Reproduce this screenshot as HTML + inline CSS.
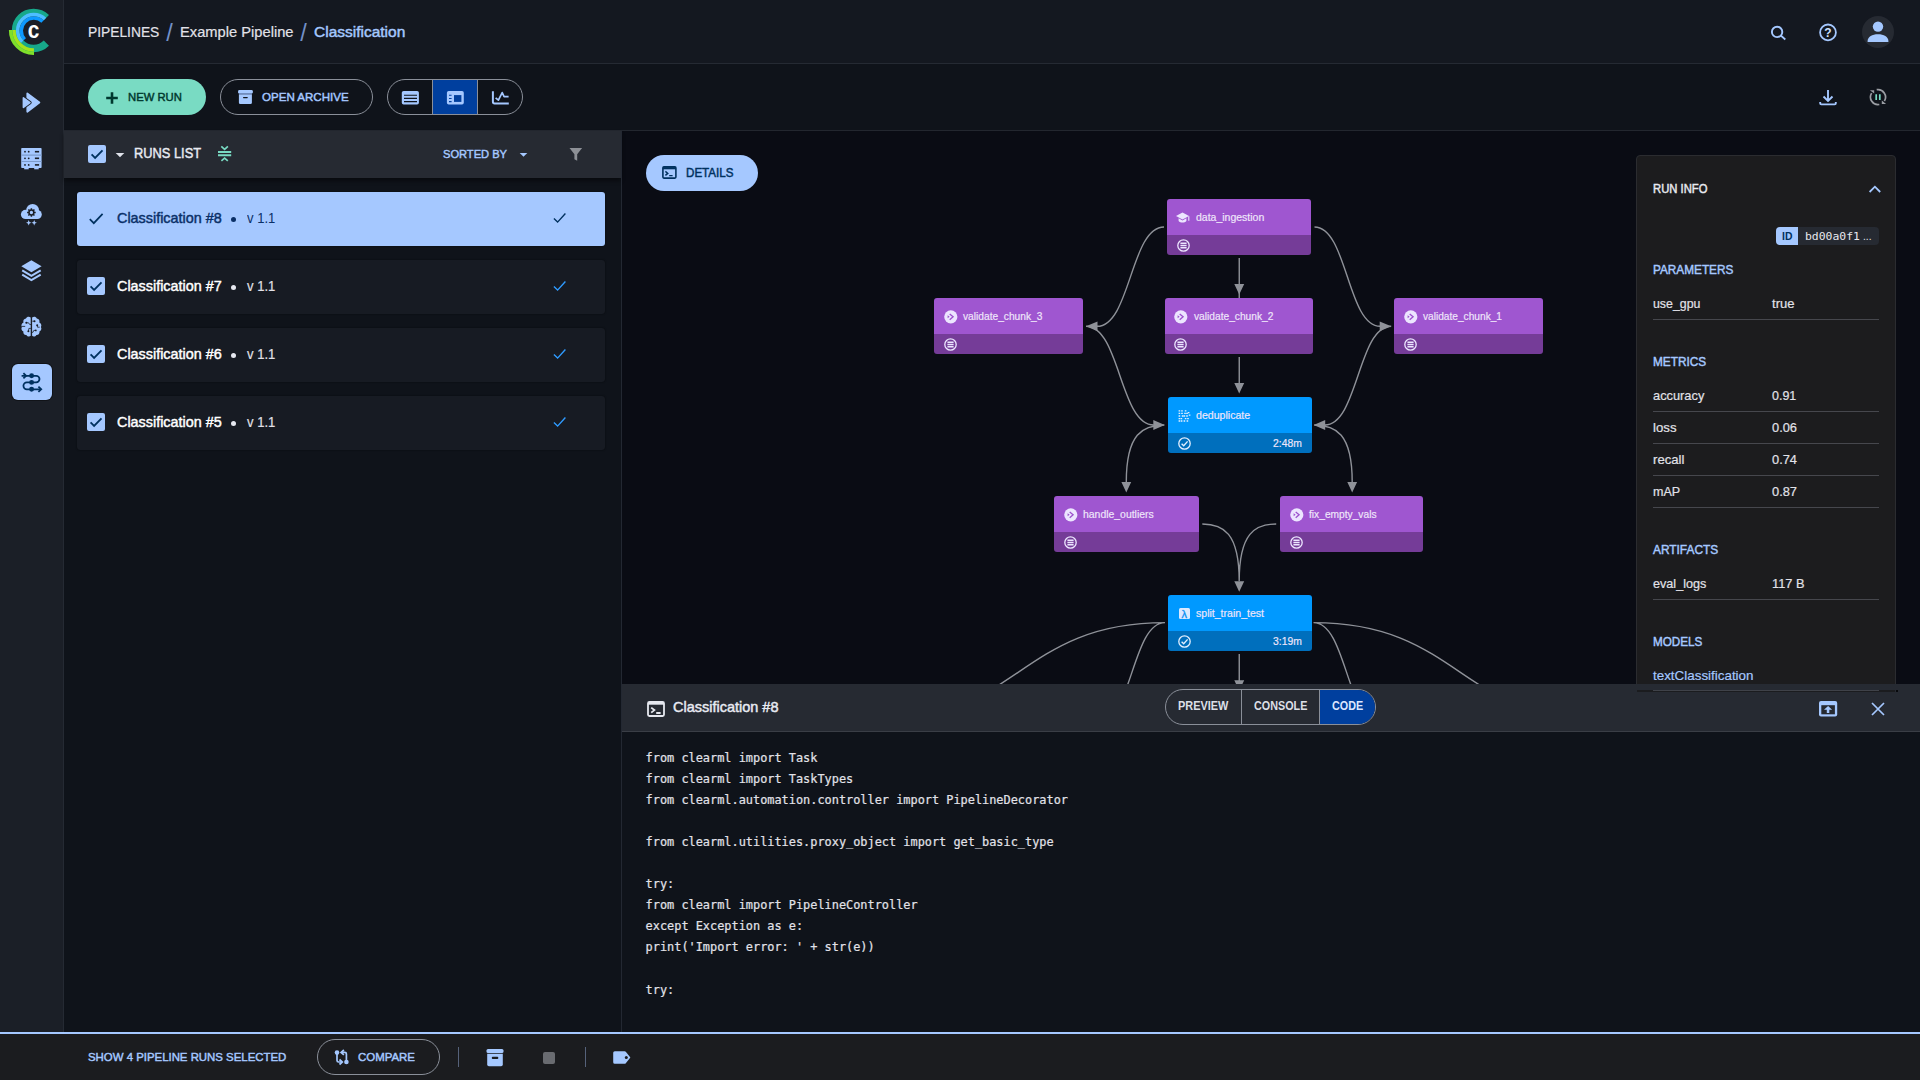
<!DOCTYPE html>
<html lang="en">
<head>
<meta charset="utf-8">
<title>Pipelines - Example Pipeline - Classification</title>
<style>
*{box-sizing:border-box;margin:0;padding:0}
html,body{width:1920px;height:1080px;overflow:hidden;background:#0f131a}
body{font-family:"Liberation Sans",sans-serif;color:#e2e2e9;position:relative;-webkit-font-smoothing:antialiased}
.abs{position:absolute}
.t{position:absolute;white-space:pre;line-height:1;transform-origin:0 0}
.b{font-weight:700}
svg{position:absolute;overflow:visible}
/* regions */
#sidebar{left:0;top:0;width:64px;height:1032px;background:#1b1f27;border-right:1px solid #252a33}
#header{left:64px;top:0;width:1856px;height:64px;background:#141820;border-bottom:1px solid #252a33}
#toolbar{left:64px;top:64px;width:1856px;height:67px;background:#0f131a;border-bottom:1px solid #23272f}
#listpanel{left:64px;top:131px;width:557px;height:901px;background:#0f131a}
#listhead{left:64px;top:131px;width:557px;height:47px;background:#262a32;box-shadow:0 3px 4px rgba(0,0,0,.45)}
#splitter{left:621px;top:131px;width:1px;height:901px;background:#232832}
#graph{left:622px;top:131px;width:1298px;height:554px;background:#0a0c14;overflow:hidden}
#codehead{left:622px;top:684px;width:1298px;height:48px;background:#262a32;border-bottom:1px solid #3a3e46}
#codebody{left:622px;top:732px;width:1298px;height:300px;background:#0f131a}
#bottombar{left:0;top:1032px;width:1920px;height:48px;background:#1b1c1f;border-top:2px solid #a5c8ff}
.item{position:absolute;left:77px;width:528px;height:54px;border-radius:3px;background:#171b23;box-shadow:0 0 1.5px rgba(0,0,0,.8)}
.item.sel{background:#a5c8ff}
.cb{position:absolute;width:18px;height:18px;border-radius:2px;background:#a5c8ff}
.pill{position:absolute;border-radius:18px;height:36px}
.node{position:absolute;height:56px;border-radius:3px;overflow:hidden}
.node .top{position:absolute;left:0;top:0;right:0;height:36px}
.node .bot{position:absolute;left:0;top:36px;right:0;height:20px}
.node.p .top{background:#9f56d0}
.node.p .bot{background:#753c98}
.node.bl .top{background:#0099ff}
.node.bl .bot{background:#006fbd}
.nt{position:absolute;white-space:pre;line-height:1;font-size:11.5px;color:#efe4fa;top:12px;left:29px}
.code{position:absolute;left:645.6px;-webkit-text-stroke:.2px #e2e2e9;white-space:pre;font-family:"DejaVu Sans Mono","Liberation Mono",monospace;font-size:11.9px;line-height:21.1px;color:#e2e2e9}
</style>
</head>
<body>
<div class="abs" id="sidebar"></div>
<div class="abs" id="header"></div>
<div class="abs" id="toolbar"></div>
<div class="abs" id="listpanel"></div>
<div class="abs" id="graph"></div>
<div class="abs" id="listhead"></div>
<div class="abs" id="splitter"></div>
<div class="abs" id="codehead"></div>
<div class="abs" id="codebody"></div>
<div class="abs" id="bottombar"></div>
<!--SIDEBAR-->
<svg style="left:0;top:0" width="64" height="64" viewBox="0 0 64 64"><path d="M46.38 43.18A18.075 18.075 0 1 1 46.38 17.62" fill="none" stroke="#17a88a" stroke-width="7.350"/><path d="M24.66 39.34A12.65 12.65 0 0 1 42.54 21.46" fill="none" stroke="#0d99ff" stroke-width="3.500"/><path d="M22.20 41.80A16.125 16.125 0 0 1 45.00 19.00" fill="none" stroke="#4dbeff" stroke-width="3.500"/><path d="M33.94 50.00A19.6 19.6 0 0 1 14.00 30.06" fill="none" stroke="#a6e31c" stroke-width="3.400"/><path d="M34.00 53.40A23.0 23.0 0 0 1 10.60 30.00" fill="none" stroke="#7fe02a" stroke-width="3.400"/><text x="33.500" y="37.800" font-family="Liberation Sans,sans-serif" font-weight="700" font-size="23.500" fill="#fff" text-anchor="middle" textLength="11.600" lengthAdjust="spacingAndGlyphs">c</text></svg>
<svg style="left:12px;top:84px" width="40" height="40" viewBox="12 84 40 40"><path d="M27.3 93.4L39.4 102.5L27.3 111.8z" fill="#a5c8ff" stroke="#a5c8ff" stroke-width="1.8" stroke-linejoin="round"/><path d="M23.4 97.9L30 102.6L23.4 107.3z" fill="#a5c8ff" stroke="#1b1f27" stroke-width="3.4" stroke-linejoin="round"/><path d="M23.4 97.9L30 102.6L23.4 107.3z" fill="#a5c8ff" stroke="#a5c8ff" stroke-width="1.6" stroke-linejoin="round"/></svg><svg style="left:12px;top:140px" width="40" height="40" viewBox="12 140 40 40"><rect x="21.2" y="148" width="20.4" height="20" rx=".8" fill="#a5c8ff"/><rect x="24.2" y="167.5" width="4.5" height="1.8" fill="#a5c8ff"/><rect x="34.2" y="167.5" width="4.5" height="1.8" fill="#a5c8ff"/><path d="M21.2 155.1h20.4M21.2 161.5h20.4" stroke="#7d9ccc" stroke-width="1.1"/><circle cx="25" cy="151.7" r=".9" fill="#1b1f27"/><circle cx="28.7" cy="151.7" r=".9" fill="#1b1f27"/><rect x="34.9" y="150.9" width="4.2" height="1.6" fill="#1b1f27"/><circle cx="25" cy="158.3" r=".9" fill="#1b1f27"/><circle cx="28.7" cy="158.3" r=".9" fill="#1b1f27"/><rect x="34.9" y="157.5" width="4.2" height="1.6" fill="#1b1f27"/><circle cx="25" cy="164.9" r=".9" fill="#1b1f27"/><circle cx="28.7" cy="164.9" r=".9" fill="#1b1f27"/><rect x="34.9" y="164.1" width="4.2" height="1.6" fill="#1b1f27"/></svg><svg style="left:12px;top:196px" width="40" height="40" viewBox="12 196 40 40"><g fill="#a5c8ff"><circle cx="25.500" cy="214.400" r="4.600"/><circle cx="32.600" cy="210.400" r="6.400"/><circle cx="37.300" cy="214.500" r="4.500"/><rect x="25.500" y="211" width="11.800" height="8"/></g><path d="M33.20 212.50L35.70 212.50M32.67 213.77L34.44 215.54M31.40 214.30L31.40 216.80M30.13 213.77L28.36 215.54M29.60 212.50L27.10 212.50M30.13 211.23L28.36 209.46M31.40 210.70L31.40 208.20M32.67 211.23L34.44 209.46" stroke="#1b1f27" stroke-width="1.5"/><circle cx="31.4" cy="212.5" r="2.4" fill="#a5c8ff" stroke="#1b1f27" stroke-width="1.5"/><path d="M28.7 220.10000000000002Q28.925 222.57500000000002 31.4 222.8Q28.925 223.025 28.7 225.5Q28.474999999999998 223.025 26.0 222.8Q28.474999999999998 222.57500000000002 28.7 220.10000000000002zM34.2 220.10000000000002Q34.425000000000004 222.57500000000002 36.900000000000006 222.8Q34.425000000000004 223.025 34.2 225.5Q33.975 223.025 31.500000000000004 222.8Q33.975 222.57500000000002 34.2 220.10000000000002z" fill="#a5c8ff"/></svg><svg style="left:12px;top:250px" width="40" height="40" viewBox="12 250 40 40"><path d="M31.4 260.2L41.6 266.3L31.4 272.3L21.3 266.3z" fill="#a5c8ff"/><path d="M22.2 270.4L31.4 275.9L40.7 270.4" fill="none" stroke="#a5c8ff" stroke-width="2.1"/><path d="M22.2 274.6L31.4 280.1L40.7 274.6" fill="none" stroke="#a5c8ff" stroke-width="2.1"/></svg><svg style="left:12px;top:306px" width="40" height="40" viewBox="12 306 40 40"><path d="M30.7 317.6c-1.6-1.3-4-.9-4.7 1c-2 .1-3.200 2-2.500 3.800c-1.800 .9-2.700 3-1.600 4.700c-1.100 1.500-.300 3.800 1.500 4.400c-.500 2 1.100 3.700 3 3.400c.900 1.700 3 2 4.300 .9z" fill="#a5c8ff"/><path d="M30.7 317.6c-1.6-1.3-4-.9-4.7 1c-2 .1-3.200 2-2.500 3.800c-1.800 .9-2.700 3-1.600 4.700c-1.100 1.500-.300 3.800 1.500 4.400c-.500 2 1.100 3.700 3 3.400c.900 1.700 3 2 4.300 .9z" fill="#a5c8ff" transform="translate(62.8 0) scale(-1 1)"/><g fill="#1b1f27"><circle cx="26.3" cy="322.8" r="1"/><circle cx="28.4" cy="331.3" r="1"/><circle cx="34.5" cy="321.2" r="1"/><circle cx="37.2" cy="325.3" r="1"/><circle cx="35.8" cy="330.4" r=".9"/></g><path d="M26.300 322.800h2.200l1.200 1.700h1.200M21.600 326.400h3.600M28.400 331.300l.500-2.900h2M34.500 321.200h-2.200M37.200 325.300l.300 1.900h2.200M35.800 330.400h-2l-.800 1.900h-1" fill="none" stroke="#1b1f27" stroke-width=".8"/></svg><div class="abs" style="left:12px;top:364px;width:40px;height:36px;border-radius:6px;background:#a5c8ff;box-shadow:0 0 0 1px #111318"></div><svg style="left:12px;top:362px" width="40" height="40" viewBox="12 362 40 40"><path d="M21.6 375.8H36.200a3.300 3.300 0 0 1 0 6.600H26.900a3.450 3.450 0 0 0 0 6.900H41" fill="none" stroke="#00315f" stroke-width="1.800"/><path d="M23.400 373.200l2.700 2.600l-2.700 2.600M38.400 386.700l2.800 2.600l-2.800 2.600" fill="none" stroke="#00315f" stroke-width="1.800"/><circle cx="31.6" cy="375.8" r="2.450" fill="#00315f"/><circle cx="31.6" cy="382.4" r="2.450" fill="#00315f"/><circle cx="31.6" cy="389.3" r="2.450" fill="#00315f"/></svg>
<!--HEADER-->
<span class="t" style="left:88.4px;top:24.76px;font-size:14.7px;color:#e2e2e9;-webkit-text-stroke:.18px #e2e2e9;transform:scaleX(0.9391)">PIPELINES</span>
<span class="t" style="left:166.2px;top:22.41px;font-size:23.5px;color:#7391c8">/</span>
<span class="t" style="left:180.3px;top:24.76px;font-size:14.7px;color:#e2e2e9;-webkit-text-stroke:.18px #e2e2e9;transform:scaleX(1.0001)">Example Pipeline</span>
<span class="t" style="left:300.2px;top:22.41px;font-size:23.5px;color:#7391c8">/</span>
<span class="t" style="left:314px;top:24.76px;font-size:14.7px;color:#a5c8ff;-webkit-text-stroke:.45px #a5c8ff;transform:scaleX(1.0551)">Classification</span>
<svg style="left:1768px;top:22px" width="20" height="20" viewBox="0 0 20 20"><circle cx="9.100" cy="9.900" r="5.200" fill="none" stroke="#a5c8ff" stroke-width="1.900"/><path d="M12.800 13.500L17.300 17.500" stroke="#a5c8ff" stroke-width="1.700"/></svg>
<svg style="left:1818px;top:22px" width="20" height="20" viewBox="0 0 20 20"><circle cx="10" cy="10.4" r="7.9" fill="none" stroke="#a5c8ff" stroke-width="1.8"/><text x="10" y="14.6" font-family="Liberation Sans,sans-serif" font-weight="700" font-size="12" fill="#cfe0ff" text-anchor="middle">?</text></svg>
<div class="abs" style="left:1862px;top:16px;width:32px;height:32px;border-radius:16px;background:#262a32"></div>
<svg style="left:1862px;top:16px" width="32" height="32" viewBox="0 0 32 32"><circle cx="16" cy="10.6" r="5.2" fill="#a5c8ff"/><path d="M5.6 26v-1.2c0-4 4.6-6.6 10.4-6.6s10.4 2.6 10.4 6.6V26z" fill="#a5c8ff"/></svg>
<!--TOOLBAR-->
<div class="pill" style="left:88px;top:79px;width:118px;background:#79dbc3"></div>
<svg style="left:105px;top:91px" width="14" height="14" viewBox="0 0 14 14"><path d="M7 1.200v11.600M1.200 7h11.600" stroke="#00382e" stroke-width="2.600"/></svg>
<span class="t" style="left:128px;top:90.98px;font-size:11.6px;color:#00382e;-webkit-text-stroke:.45px #00382e;transform:scaleX(0.9731)">NEW RUN</span>
<div class="pill" style="left:220px;top:79px;width:153px;border:1px solid #8a8f99"></div>
<svg style="left:230px;top:82px" width="40" height="30" viewBox="230 82 40 30"><rect x="238.100" y="90.100" width="14.700" height="3.400" rx="1.200" fill="#a5c8ff"/><rect x="238.900" y="93" width="13" height="1.700" fill="#6f8cbf"/><path d="M238.900 94.600h13v8.100a1.400 1.400 0 0 1-1.400 1.400h-10.200a1.400 1.400 0 0 1-1.400-1.400z" fill="#a5c8ff"/><rect x="243" y="96.900" width="4.800" height="1.300" rx=".6" fill="#0f131a"/></svg>
<span class="t" style="left:261.7px;top:90.98px;font-size:11.6px;color:#a5c8ff;-webkit-text-stroke:.45px #a5c8ff;transform:scaleX(0.9956)">OPEN ARCHIVE</span>
<div class="pill" style="left:387px;top:79px;width:136px;border:1px solid #8a8f99;overflow:hidden"><div class="abs" style="left:44px;top:0;width:46px;height:34px;background:#003f9e;border-left:1px solid #8a8f99;border-right:1px solid #8a8f99"></div></div>
<svg style="left:395px;top:82px" width="40" height="30" viewBox="395 82 40 30"><rect x="401.800" y="91" width="17.100" height="13.600" rx="1.800" fill="#a5c8ff"/><path d="M404 95.250h13M404 98.400h13M404 101.650h13" stroke="#0f131a" stroke-width="1.200"/></svg>
<svg style="left:435px;top:82px" width="40" height="30" viewBox="435 82 40 30"><rect x="446.900" y="91" width="16.900" height="13.600" rx="1.800" fill="#a5c8ff"/><rect x="454" y="95.100" width="7.400" height="6.800" fill="#003f9e"/><path d="M449 95.300h2.600M449 98.450h2.600M449 101.650h2.600" stroke="#003f9e" stroke-width="1.100"/></svg>
<svg style="left:480px;top:82px" width="40" height="30" viewBox="480 82 40 30"><path d="M492.900 91.200v10.600a1.700 1.700 0 0 0 1.700 1.700h14.200" fill="none" stroke="#a5c8ff" stroke-width="2"/><path d="M495.600 97.900l2.800 2.300l3.800-7.600l1.900 4.100h4.500" fill="none" stroke="#a5c8ff" stroke-width="1.700" stroke-linejoin="round"/></svg>
<svg style="left:1808px;top:80px" width="40" height="36" viewBox="1808 80 40 36"><path d="M1828 90v10.600M1823.500 96.500l4.500 4.500l4.500-4.500" fill="none" stroke="#a5c8ff" stroke-width="1.900"/><path d="M1820.200 102v1.300a1.100 1.100 0 0 0 1.100 1.100h13.400a1.100 1.100 0 0 0 1.100-1.100v-1.300" fill="none" stroke="#a5c8ff" stroke-width="1.900"/></svg>
<svg style="left:1858px;top:78px" width="40" height="40" viewBox="1858 78 40 40"><path d="M1876.70 89.71A7.5 7.5 0 0 1 1884.36 101.07M1879.30 104.49A7.5 7.5 0 0 1 1871.64 93.13" fill="none" stroke="#9a9da3" stroke-width="1.700"/><path d="M1881.800 100.600V104H1886.100zM1874.200 93.600V90.200H1869.900z" fill="#9a9da3"/><path d="M1876.200 94.300v5.600M1879.800 94.300v5.600" stroke="#79dbc3" stroke-width="1.700"/></svg>
<!--LIST-->
<div class="cb" style="left:88px;top:145px"></div><svg style="left:88px;top:145px" width="18" height="18" viewBox="0 0 18 18"><path d="M3.6 9.400l3.500 3.500l7.400-7.500" fill="none" stroke="#00315f" stroke-width="1.8"/></svg>
<svg style="left:115px;top:152px" width="10" height="6" viewBox="0 0 10 6"><path d="M.7 .9h8.600l-4.300 4.300z" fill="#dfe2ea"/></svg>
<span class="t" style="left:134.4px;top:145.77px;font-size:14.8px;color:#e8eaf2;-webkit-text-stroke:.45px #e8eaf2;transform:scaleX(0.8681)">RUNS LIST</span>
<svg style="left:210px;top:140px" width="30" height="26" viewBox="210 140 30 26"><path d="M218 152h13.200M218 155.250h13.200" stroke="#79dbc3" stroke-width="2"/><path d="M221.300 146.400l3.300 3l3.300-3M221.400 160.900l3.200-2.700l3.200 2.700" fill="none" stroke="#79dbc3" stroke-width="1.700"/></svg>
<span class="t" style="left:443px;top:147.98px;font-size:11.6px;color:#a5c8ff;-webkit-text-stroke:.45px #a5c8ff;transform:scaleX(0.9581)">SORTED BY</span>
<svg style="left:519px;top:152px" width="9" height="6" viewBox="0 0 9 6"><path d="M.7 .9h7.600l-3.800 3.900z" fill="#a5c8ff"/></svg>
<svg style="left:569px;top:147px" width="14" height="15" viewBox="0 0 14 15"><path d="M.5 1h12.600l-4.900 6.200v6.600l-2.800-1.500v-5.100z" fill="#8d9096"/></svg>
<div class="item sel" style="top:192px"></div>
<svg style="left:88px;top:210px" width="18" height="18" viewBox="0 0 18 18"><path d="M1.800 9.200l4 4l8.800-9.400" fill="none" stroke="#00315f" stroke-width="1.7"/></svg>
<span class="t" style="left:117.3px;top:211.07px;font-size:14.8px;color:#0a3068;-webkit-text-stroke:.45px #0a3068;transform:scaleX(0.9717)">Classification #8</span>
<div class="abs" style="left:230.500px;top:216.5px;width:5.700px;height:5.700px;border-radius:50%;background:#0a2f66"></div>
<span class="t" style="left:247px;top:211.07px;font-size:14.8px;color:#0a3068;transform:scaleX(0.8818)">v 1.1</span>
<svg style="left:553px;top:212px" width="14" height="12" viewBox="0 0 14 12"><path d="M.9 6.600l3.700 3.500l7.800-8.600" fill="none" stroke="#00315f" stroke-width="1.4"/></svg>
<div class="item" style="top:260px"></div>
<div class="cb" style="left:87px;top:277px"></div><svg style="left:87px;top:277px" width="18" height="18" viewBox="0 0 18 18"><path d="M3.600 9.400l3.500 3.500l7.400-7.500" fill="none" stroke="#00315f" stroke-width="1.8"/></svg>
<span class="t" style="left:117.3px;top:279.07px;font-size:14.8px;color:#ffffff;-webkit-text-stroke:.45px #ffffff;transform:scaleX(0.9717)">Classification #7</span>
<div class="abs" style="left:230.500px;top:284.5px;width:5.700px;height:5.700px;border-radius:50%;background:#e6e8f0"></div>
<span class="t" style="left:247px;top:279.07px;font-size:14.8px;color:#e2e2e9;-webkit-text-stroke:.18px #e2e2e9;transform:scaleX(0.8818)">v 1.1</span>
<svg style="left:553px;top:280px" width="14" height="12" viewBox="0 0 14 12"><path d="M.9 6.600l3.700 3.500l7.800-8.600" fill="none" stroke="#2f9bff" stroke-width="1.4"/></svg>
<div class="item" style="top:328px"></div>
<div class="cb" style="left:87px;top:345px"></div><svg style="left:87px;top:345px" width="18" height="18" viewBox="0 0 18 18"><path d="M3.600 9.400l3.500 3.500l7.400-7.500" fill="none" stroke="#00315f" stroke-width="1.8"/></svg>
<span class="t" style="left:117.3px;top:347.07px;font-size:14.8px;color:#ffffff;-webkit-text-stroke:.45px #ffffff;transform:scaleX(0.9717)">Classification #6</span>
<div class="abs" style="left:230.500px;top:352.5px;width:5.700px;height:5.700px;border-radius:50%;background:#e6e8f0"></div>
<span class="t" style="left:247px;top:347.07px;font-size:14.8px;color:#e2e2e9;-webkit-text-stroke:.18px #e2e2e9;transform:scaleX(0.8818)">v 1.1</span>
<svg style="left:553px;top:348px" width="14" height="12" viewBox="0 0 14 12"><path d="M.9 6.600l3.700 3.500l7.800-8.600" fill="none" stroke="#2f9bff" stroke-width="1.4"/></svg>
<div class="item" style="top:396px"></div>
<div class="cb" style="left:87px;top:413px"></div><svg style="left:87px;top:413px" width="18" height="18" viewBox="0 0 18 18"><path d="M3.600 9.400l3.500 3.500l7.400-7.500" fill="none" stroke="#00315f" stroke-width="1.8"/></svg>
<span class="t" style="left:117.3px;top:415.07px;font-size:14.8px;color:#ffffff;-webkit-text-stroke:.45px #ffffff;transform:scaleX(0.9717)">Classification #5</span>
<div class="abs" style="left:230.500px;top:420.5px;width:5.700px;height:5.700px;border-radius:50%;background:#e6e8f0"></div>
<span class="t" style="left:247px;top:415.07px;font-size:14.8px;color:#e2e2e9;-webkit-text-stroke:.18px #e2e2e9;transform:scaleX(0.8818)">v 1.1</span>
<svg style="left:553px;top:416px" width="14" height="12" viewBox="0 0 14 12"><path d="M.9 6.600l3.700 3.500l7.800-8.600" fill="none" stroke="#2f9bff" stroke-width="1.4"/></svg>
<!--GRAPH-->
<div class="pill" style="left:646px;top:155px;width:112px;background:#a5c8ff"></div>
<svg style="left:662px;top:166px" width="15" height="13" viewBox="0 0 15 13"><rect x=".9" y=".9" width="13" height="11.200" rx="1" fill="none" stroke="#00315f" stroke-width="1.600"/><path d="M.9 2.200h13" stroke="#00315f" stroke-width="2.200"/><path d="M3.400 5.400l2.400 2l-2.400 2M7.200 9.600h3.400" fill="none" stroke="#00315f" stroke-width="1.400"/></svg>
<span class="t" style="left:685.5px;top:166.84px;font-size:12px;color:#00315f;-webkit-text-stroke:.45px #00315f;transform:scaleX(0.9669)">DETAILS</span>
<div class="abs" style="left:622px;top:131px;width:1298px;height:553px;overflow:hidden"><svg style="left:-622px;top:-131px" width="1920" height="1080" viewBox="0 0 1920 1080"><path d="M1164.0 227.0C1130.5 227.0 1130.5 326.3 1097.0 326.3M1314.5 227.0C1347.3 227.0 1347.3 326.3 1380.2 326.3M1086.0 326.3C1119.9 326.3 1119.9 425.0 1153.8 425.0M1391.2 326.3C1358.0 326.3 1358.0 425.0 1324.7 425.0M1239.25 258V298M1239.25 357V385M1239.25 654V684M1164.3 425.0C1143.0 425.0 1126.3 433.5 1126.3 481.9M1314.2 425.0C1335.5 425.0 1352.2 433.5 1352.2 481.9M1202.3 524.0C1223.0 524.0 1239.2 532.6 1239.2 581.3M1276.2 524.0C1255.5 524.0 1239.2 532.6 1239.2 581.3M1165 622.600C1018.5 622.600 1018.5 721.600 872 721.600M1313.5 622.600C1460.0 622.600 1460.0 721.600 1606.5 721.600M1165 622.600C1132.0 622.600 1132.0 721.600 1099 721.600M1313.5 622.600C1346.5 622.600 1346.5 721.600 1379.5 721.600" fill="none" stroke="#8f9299" stroke-width="1.400"/><path d="M1086.0 326.3L1097.5 321.4L1097.5 331.2zM1391.2 326.3L1379.7 331.2L1379.7 321.4zM1164.8 425.0L1153.3 429.9L1153.3 420.1zM1313.7 425.0L1325.2 420.1L1325.2 429.9zM1239.2 294.5L1234.3 284.0L1244.2 284.0zM1239.2 393.5L1234.3 383.0L1244.2 383.0zM1239.2 690.8L1234.3 680.3L1244.2 680.3zM1126.3 492.4L1121.4 481.9L1131.2 481.9zM1352.2 492.4L1347.3 481.9L1357.1 481.9zM1239.2 591.8L1234.3 581.3L1244.2 581.3zM1239.2 591.8L1234.3 581.3L1244.2 581.3z" fill="#8f9299"/></svg></div>
<div class="node p" style="left:1167px;top:199.4px;width:144px"><div class="top"></div><div class="bot"></div></div>
<svg style="left:1176.3px;top:211.79999999999998px" width="14" height="12" viewBox="0 0 14 12"><path d="M6.500 .4l6.500 3.500l-6.500 3.500l-6.500-3.500z" fill="#ece6ff"/><path d="M2.600 6.300v2.600c1.800 2 6 2 7.800 0v-2.600l-3.900 2.100z" fill="#ece6ff"/><path d="M12.800 4.200v4.600" stroke="#ece6ff" stroke-width="1.100"/></svg>
<span class="t" style="left:1196.1px;top:211.72px;font-size:11.2px;color:#efe6fb;-webkit-text-stroke:.18px #efe6fb;transform:scaleX(0.9384)">data_ingestion</span>
<svg style="left:1176.8px;top:239.3px" width="13" height="13" viewBox="0 0 13 13"><circle cx="6.500" cy="6.500" r="5.700" fill="none" stroke="#ece6ff" stroke-width="1.300"/><path d="M3.400 4.300h6.200M3.400 6.500h6.200M3.400 8.700h6.200" stroke="#ece6ff" stroke-width="1.500"/></svg>
<div class="node p" style="left:934px;top:298.4px;width:149px"><div class="top"></div><div class="bot"></div></div>
<svg style="left:943.5px;top:309.79999999999995px" width="14" height="14" viewBox="0 0 14 14"><circle cx="6.800" cy="6.800" r="6.600" fill="#ece6ff"/><path d="M5.700 3.900l3.400 2.900l-3.400 2.900" fill="none" stroke="#9b52cc" stroke-width="1.300"/><path d="M3.600 5.300l2 1.500l-2 1.500z" fill="#9b52cc"/></svg>
<span class="t" style="left:963.1px;top:310.72px;font-size:11.2px;color:#efe6fb;-webkit-text-stroke:.18px #efe6fb;transform:scaleX(0.9117)">validate_chunk_3</span>
<svg style="left:943.8px;top:338.29999999999995px" width="13" height="13" viewBox="0 0 13 13"><circle cx="6.500" cy="6.500" r="5.700" fill="none" stroke="#ece6ff" stroke-width="1.300"/><path d="M3.400 4.300h6.200M3.400 6.500h6.200M3.400 8.700h6.200" stroke="#ece6ff" stroke-width="1.500"/></svg>
<div class="node p" style="left:1164.5px;top:298.4px;width:148px"><div class="top"></div><div class="bot"></div></div>
<svg style="left:1174.0px;top:309.79999999999995px" width="14" height="14" viewBox="0 0 14 14"><circle cx="6.800" cy="6.800" r="6.600" fill="#ece6ff"/><path d="M5.700 3.900l3.400 2.900l-3.400 2.900" fill="none" stroke="#9b52cc" stroke-width="1.300"/><path d="M3.600 5.300l2 1.500l-2 1.500z" fill="#9b52cc"/></svg>
<span class="t" style="left:1193.6px;top:310.72px;font-size:11.2px;color:#efe6fb;-webkit-text-stroke:.18px #efe6fb;transform:scaleX(0.9117)">validate_chunk_2</span>
<svg style="left:1174.3px;top:338.29999999999995px" width="13" height="13" viewBox="0 0 13 13"><circle cx="6.500" cy="6.500" r="5.700" fill="none" stroke="#ece6ff" stroke-width="1.300"/><path d="M3.400 4.300h6.200M3.400 6.500h6.200M3.400 8.700h6.200" stroke="#ece6ff" stroke-width="1.500"/></svg>
<div class="node p" style="left:1394px;top:298.4px;width:149px"><div class="top"></div><div class="bot"></div></div>
<svg style="left:1403.5px;top:309.79999999999995px" width="14" height="14" viewBox="0 0 14 14"><circle cx="6.800" cy="6.800" r="6.600" fill="#ece6ff"/><path d="M5.700 3.900l3.400 2.900l-3.400 2.900" fill="none" stroke="#9b52cc" stroke-width="1.300"/><path d="M3.600 5.300l2 1.500l-2 1.500z" fill="#9b52cc"/></svg>
<span class="t" style="left:1423.1px;top:310.72px;font-size:11.2px;color:#efe6fb;-webkit-text-stroke:.18px #efe6fb;transform:scaleX(0.9071)">validate_chunk_1</span>
<svg style="left:1403.8px;top:338.29999999999995px" width="13" height="13" viewBox="0 0 13 13"><circle cx="6.500" cy="6.500" r="5.700" fill="none" stroke="#ece6ff" stroke-width="1.300"/><path d="M3.400 4.300h6.200M3.400 6.500h6.200M3.400 8.700h6.200" stroke="#ece6ff" stroke-width="1.500"/></svg>
<div class="node bl" style="left:1167.7px;top:397.4px;width:144.2px"><div class="top"></div><div class="bot"></div></div>
<svg style="left:1177.5px;top:410.09999999999997px" width="13" height="13" viewBox="0 0 13 13"><path d="M0.6 0.8h1.600M3.2 0.8h1.600M6.8 0.8h1.600M0.6 3.4h1.600M3.2 3.4h1.600M6.2 3.4h1.600M8.2 3.4h1.600M0.6 6h1.600M3.8 6h1.600M5.6 6h1.600M8.2 6h1.600M10.8 5.2h1.600M0.6 8.6h1.600M2.6 8.6h1.600M6.8 8.6h1.600M9.2 8.6h1.600M0.6 11h1.600M2.8 11h1.600M5.6 11h1.600M8.6 11h1.600M9.8 2.6h1.600" stroke="#e3efff" stroke-width="1.300"/></svg>
<span class="t" style="left:1196.3px;top:409.72px;font-size:11.2px;color:#efe6fb;-webkit-text-stroke:.18px #efe6fb;transform:scaleX(0.9470)">deduplicate</span>
<svg style="left:1178.2px;top:437.09999999999997px" width="13" height="13" viewBox="0 0 13 13"><circle cx="6.500" cy="6.500" r="5.700" fill="none" stroke="#e3efff" stroke-width="1.300"/><path d="M3.600 6.700l2.100 2l3.900-4.300" fill="none" stroke="#e3efff" stroke-width="1.400"/></svg>
<span class="t" style="left:1273.4px;top:438.42px;font-size:11.2px;color:#efe6fb;-webkit-text-stroke:.18px #efe6fb;transform:scaleX(0.9262)">2:48m</span>
<div class="node p" style="left:1054.2px;top:496.4px;width:145px"><div class="top"></div><div class="bot"></div></div>
<svg style="left:1063.7px;top:507.79999999999995px" width="14" height="14" viewBox="0 0 14 14"><circle cx="6.800" cy="6.800" r="6.600" fill="#ece6ff"/><path d="M5.700 3.900l3.400 2.900l-3.400 2.900" fill="none" stroke="#9b52cc" stroke-width="1.300"/><path d="M3.600 5.300l2 1.500l-2 1.500z" fill="#9b52cc"/></svg>
<span class="t" style="left:1083.3px;top:508.72px;font-size:11.2px;color:#efe6fb;-webkit-text-stroke:.18px #efe6fb;transform:scaleX(0.9316)">handle_outliers</span>
<svg style="left:1064.0px;top:536.3px" width="13" height="13" viewBox="0 0 13 13"><circle cx="6.500" cy="6.500" r="5.700" fill="none" stroke="#ece6ff" stroke-width="1.300"/><path d="M3.400 4.300h6.200M3.400 6.500h6.200M3.400 8.700h6.200" stroke="#ece6ff" stroke-width="1.500"/></svg>
<div class="node p" style="left:1280px;top:496.4px;width:143px"><div class="top"></div><div class="bot"></div></div>
<svg style="left:1289.5px;top:507.79999999999995px" width="14" height="14" viewBox="0 0 14 14"><circle cx="6.800" cy="6.800" r="6.600" fill="#ece6ff"/><path d="M5.700 3.900l3.400 2.900l-3.400 2.900" fill="none" stroke="#9b52cc" stroke-width="1.300"/><path d="M3.600 5.300l2 1.500l-2 1.500z" fill="#9b52cc"/></svg>
<span class="t" style="left:1309.1px;top:508.72px;font-size:11.2px;color:#efe6fb;-webkit-text-stroke:.18px #efe6fb;transform:scaleX(0.9122)">fix_empty_vals</span>
<svg style="left:1289.8px;top:536.3px" width="13" height="13" viewBox="0 0 13 13"><circle cx="6.500" cy="6.500" r="5.700" fill="none" stroke="#ece6ff" stroke-width="1.300"/><path d="M3.400 4.300h6.200M3.400 6.500h6.200M3.400 8.700h6.200" stroke="#ece6ff" stroke-width="1.500"/></svg>
<div class="node bl" style="left:1167.7px;top:595.4px;width:144.2px"><div class="top"></div><div class="bot"></div></div>
<div class="abs" style="left:1178.5px;top:608.2px;width:11.800px;height:11.300px;border-radius:1.500px;background:#dce9ff"></div><span class="t" style="left:1181.5px;top:608.6px;font-size:11px;color:#0a90f2;-webkit-text-stroke:.3px #0a90f2">λ</span>
<span class="t" style="left:1196.3px;top:607.72px;font-size:11.2px;color:#efe6fb;-webkit-text-stroke:.18px #efe6fb;transform:scaleX(0.9426)">split_train_test</span>
<svg style="left:1178.2px;top:635.1px" width="13" height="13" viewBox="0 0 13 13"><circle cx="6.500" cy="6.500" r="5.700" fill="none" stroke="#e3efff" stroke-width="1.300"/><path d="M3.600 6.700l2.100 2l3.900-4.300" fill="none" stroke="#e3efff" stroke-width="1.400"/></svg>
<span class="t" style="left:1273.4px;top:636.42px;font-size:11.2px;color:#efe6fb;-webkit-text-stroke:.18px #efe6fb;transform:scaleX(0.9262)">3:19m</span>
<!--INFO-->
<div class="abs" style="left:1636px;top:155px;width:260px;height:529px;overflow:hidden"><div class="abs" style="left:0;top:0;width:260px;height:560px;background:#1c1c1e;border:1px solid #2b2c30;border-radius:4px"></div></div>
<span class="t" style="left:1653.2px;top:182.70px;font-size:12.4px;color:#e8eaf0;-webkit-text-stroke:.45px #e8eaf0;transform:scaleX(0.9083)">RUN INFO</span>
<svg style="left:1868px;top:184px" width="14" height="10" viewBox="0 0 14 10"><path d="M1.600 8l5.300-5.300l5.300 5.300" fill="none" stroke="#a5c8ff" stroke-width="1.800"/></svg>
<div class="abs" style="left:1776px;top:227px;width:103px;height:18px;border-radius:4px;background:#262a32;overflow:hidden"><div class="abs" style="left:0;top:0;width:22px;height:18px;background:#a5c8ff"></div></div>
<span class="t" style="left:1782px;top:230.89px;font-size:11px;color:#00315f;font-weight:700;transform:scaleX(0.9455)">ID</span>
<span class="t" style="left:1804.9px;top:231.02px;font-size:11px;color:#e8e8ee;font-family:'DejaVu Sans Mono','Liberation Mono',monospace;transform:scaleX(1.0380)">bd00a0f1</span><span class="t" style="left:1863.4px;top:231.09px;font-size:11px;color:#e2e2e9;transform:scaleX(0.9376)">...</span>
<span class="t" style="left:1653.2px;top:263.50px;font-size:12.4px;color:#a5c8ff;-webkit-text-stroke:.45px #a5c8ff;transform:scaleX(0.9508)">PARAMETERS</span>
<span class="t" style="left:1653.2px;top:297.50px;font-size:12.4px;color:#e2e2e9;-webkit-text-stroke:.18px #e2e2e9;transform:scaleX(0.9969)">use_gpu</span>
<span class="t" style="left:1772px;top:297.50px;font-size:12.4px;color:#e2e2e9;-webkit-text-stroke:.18px #e2e2e9;transform:scaleX(1.0534)">true</span>
<div class="abs" style="left:1653px;top:318.8px;width:226px;height:1px;background:#46474d"></div>
<span class="t" style="left:1653.2px;top:355.50px;font-size:12.4px;color:#a5c8ff;-webkit-text-stroke:.45px #a5c8ff;transform:scaleX(0.9522)">METRICS</span>
<span class="t" style="left:1653.2px;top:389.50px;font-size:12.4px;color:#e2e2e9;-webkit-text-stroke:.18px #e2e2e9;transform:scaleX(1.0344)">accuracy</span>
<span class="t" style="left:1772px;top:389.50px;font-size:12.4px;color:#e2e2e9;-webkit-text-stroke:.18px #e2e2e9;transform:scaleX(1.0073)">0.91</span>
<div class="abs" style="left:1653px;top:410.8px;width:226px;height:1px;background:#46474d"></div>
<span class="t" style="left:1653.2px;top:421.50px;font-size:12.4px;color:#e2e2e9;-webkit-text-stroke:.18px #e2e2e9;transform:scaleX(1.0659)">loss</span>
<span class="t" style="left:1772px;top:421.50px;font-size:12.4px;color:#e2e2e9;-webkit-text-stroke:.18px #e2e2e9;transform:scaleX(1.0363)">0.06</span>
<div class="abs" style="left:1653px;top:442.8px;width:226px;height:1px;background:#46474d"></div>
<span class="t" style="left:1653.2px;top:453.50px;font-size:12.4px;color:#e2e2e9;-webkit-text-stroke:.18px #e2e2e9;transform:scaleX(1.0605)">recall</span>
<span class="t" style="left:1772px;top:453.50px;font-size:12.4px;color:#e2e2e9;-webkit-text-stroke:.18px #e2e2e9;transform:scaleX(1.0363)">0.74</span>
<div class="abs" style="left:1653px;top:474.8px;width:226px;height:1px;background:#46474d"></div>
<span class="t" style="left:1653.2px;top:485.50px;font-size:12.4px;color:#e2e2e9;-webkit-text-stroke:.18px #e2e2e9;transform:scaleX(1.0127)">mAP</span>
<span class="t" style="left:1772px;top:485.50px;font-size:12.4px;color:#e2e2e9;-webkit-text-stroke:.18px #e2e2e9;transform:scaleX(1.0363)">0.87</span>
<div class="abs" style="left:1653px;top:506.8px;width:226px;height:1px;background:#46474d"></div>
<span class="t" style="left:1653.2px;top:543.70px;font-size:12.4px;color:#a5c8ff;-webkit-text-stroke:.45px #a5c8ff;transform:scaleX(0.9597)">ARTIFACTS</span>
<span class="t" style="left:1653.2px;top:577.50px;font-size:12.4px;color:#e2e2e9;-webkit-text-stroke:.18px #e2e2e9;transform:scaleX(1.0180)">eval_logs</span>
<span class="t" style="left:1772px;top:577.50px;font-size:12.4px;color:#e2e2e9;-webkit-text-stroke:.18px #e2e2e9;transform:scaleX(1.0328)">117 B</span>
<div class="abs" style="left:1653px;top:598.8px;width:226px;height:1px;background:#46474d"></div>
<span class="t" style="left:1653.2px;top:635.80px;font-size:12.4px;color:#a5c8ff;-webkit-text-stroke:.45px #a5c8ff;transform:scaleX(0.9440)">MODELS</span>
<span class="t" style="left:1653.2px;top:670.00px;font-size:12.4px;color:#a5c8ff;-webkit-text-stroke:.18px #a5c8ff;transform:scaleX(1.0810)">textClassification</span>
<!--CODE-->
<div class="abs" style="left:1637px;top:689.600px;width:258px;height:2px;background:#1b1c1f"></div><div class="abs" style="left:1896px;top:689.600px;width:2px;height:2px;background:#08090c"></div><div class="abs" style="left:1653px;top:690px;width:226px;height:1px;background:#3f4249"></div>
<svg style="left:646.700px;top:700.600px" width="18" height="16" viewBox="0 0 18 16"><rect x="1" y="1" width="16" height="14" rx="1.400" fill="none" stroke="#e6e8ef" stroke-width="1.800"/><path d="M1 2.400h16" stroke="#e6e8ef" stroke-width="2.600"/><path d="M4.200 6.600l3.200 2.500l-3.200 2.500M9.200 12h4.400" fill="none" stroke="#e6e8ef" stroke-width="1.800"/></svg>
<span class="t" style="left:672.8px;top:700.27px;font-size:14.8px;color:#e8eaf2;-webkit-text-stroke:.45px #e8eaf2;transform:scaleX(0.9791)">Classification #8</span>
<div class="pill" style="left:1165px;top:689px;width:211px;border:1px solid #8a8f99;overflow:hidden"><div class="abs" style="left:75px;top:0;width:1px;height:34px;background:#8a8f99"></div><div class="abs" style="left:153px;top:0;width:60px;height:34px;background:#003f9e;border-left:1px solid #8a8f99"></div></div>
<span class="t" style="left:1178.2px;top:700.34px;font-size:12px;color:#dcdfe6;font-weight:700;transform:scaleX(0.9107)">PREVIEW</span>
<span class="t" style="left:1254.2px;top:700.34px;font-size:12px;color:#dcdfe6;font-weight:700;transform:scaleX(0.8998)">CONSOLE</span>
<span class="t" style="left:1332.4px;top:700.34px;font-size:12px;color:#dbe6ff;font-weight:700;transform:scaleX(0.8999)">CODE</span>
<svg style="left:1808px;top:692px" width="40" height="32" viewBox="1808 692 40 32"><rect x="1819" y="700.900" width="18.200" height="15.700" rx="2" fill="#a5c8ff"/><rect x="1821.300" y="705.200" width="13.600" height="9.100" fill="#262a32"/><path d="M1828.100 705.900l4 3.900h-2.800v3.300h-2.500v-3.300h-2.800z" fill="#a5c8ff"/></svg>
<svg style="left:1871px;top:702px" width="14" height="14" viewBox="0 0 14 14"><path d="M1 1l12 12M13 1l-12 12" stroke="#a5c8ff" stroke-width="1.700"/></svg>
<div class="code" style="top:747.5px">from clearml import Task
from clearml import TaskTypes
from clearml.automation.controller import PipelineDecorator

from clearml.utilities.proxy_object import get_basic_type

try:
from clearml import PipelineController
except Exception as e:
print('Import error: ' + str(e))

try:</div>
<!--BOTTOM-->
<span class="t" style="left:87.9px;top:1051.08px;font-size:11.6px;color:#a5c8ff;-webkit-text-stroke:.45px #a5c8ff;transform:scaleX(0.9834)">SHOW 4 PIPELINE RUNS SELECTED</span>
<div class="pill" style="left:317px;top:1039px;width:123px;border:1px solid #8a8f99"></div>
<svg style="left:322px;top:1037px" width="40" height="40" viewBox="322 1037 40 40"><g fill="none" stroke="#a5c8ff" stroke-width="1.700"><path d="M337 1052.600V1060.400a1.600 1.600 0 0 0 1.600 1.600H342"/><path d="M339.500 1059.500l2.800 2.500l-2.800 2.500"/><path d="M346.400 1062V1054a1.600 1.600 0 0 0-1.600-1.600H341.600"/><path d="M343.900 1050l-2.800 2.400l2.800 2.400"/></g><circle cx="337" cy="1052.600" r="2.300" fill="#a5c8ff"/><circle cx="346.400" cy="1062" r="2.300" fill="#a5c8ff"/></svg>
<span class="t" style="left:358px;top:1051.08px;font-size:11.6px;color:#a5c8ff;-webkit-text-stroke:.45px #a5c8ff;transform:scaleX(0.9850)">COMPARE</span>
<div class="abs" style="left:458px;top:1047px;width:1px;height:20px;background:#56627a"></div><div class="abs" style="left:585px;top:1047px;width:1px;height:20px;background:#56627a"></div>
<svg style="left:480px;top:1042px" width="40" height="30" viewBox="480 1042 40 30"><rect x="486.500" y="1049" width="17" height="4" rx="1.500" fill="#a5c8ff"/><path d="M487.200 1053.700h15.600v10.800a1.700 1.700 0 0 1-1.700 1.700h-12.200a1.700 1.700 0 0 1-1.700-1.700z" fill="#a5c8ff"/><rect x="491.800" y="1056.800" width="6.500" height="2.100" rx=".9" fill="#1b1c1f"/></svg>
<div class="abs" style="left:543px;top:1051.500px;width:12.200px;height:12.400px;border-radius:2px;background:#696b70"></div>
<svg style="left:613px;top:1051px" width="18" height="13" viewBox="0 0 18 13"><path d="M1.800 .2h9.800a1.600 1.600 0 0 1 1.200 .6l4.600 5.700l-4.600 5.700a1.600 1.600 0 0 1-1.200 .6h-9.800a1.600 1.600 0 0 1-1.600-1.600v-9.400a1.600 1.600 0 0 1 1.600-1.600z" fill="#a5c8ff"/><circle cx="13.300" cy="6.500" r="1.500" fill="#1b1c1f"/></svg>
</body>
</html>
